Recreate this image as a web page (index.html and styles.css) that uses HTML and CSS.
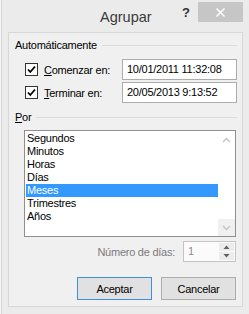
FILE: index.html
```html
<!DOCTYPE html>
<html lang="es">
<head>
<meta charset="utf-8">
<title>Agrupar</title>
<link rel="stylesheet" href="styles.css">
</head>
<body>
<div class="window">
  <div class="titlebar">
    <span class="title">Agrupar</span>
    <span class="help">?</span>
    <span class="close">
      <svg width="11" height="11" viewBox="0 0 11 11"><path d="M1.5 1.5 L9.5 9.5 M9.5 1.5 L1.5 9.5" stroke="#fff" stroke-width="1.6" fill="none"/></svg>
    </span>
  </div>
  <div class="panel">
    <div class="group-head">Automáticamente</div>
    <div class="row">
      <span class="checkbox"><svg width="11" height="11" viewBox="0 0 11 11"><path d="M2 5.5 L4.3 8 L9 2.5" stroke="#000" stroke-width="1.8" fill="none"/></svg></span>
      <span class="label"><u>C</u>omenzar en:</span>
      <div class="textbox">10/01/2011 11:32:08</div>
    </div>
    <div class="row row-second">
      <span class="checkbox"><svg width="11" height="11" viewBox="0 0 11 11"><path d="M2 5.5 L4.3 8 L9 2.5" stroke="#000" stroke-width="1.8" fill="none"/></svg></span>
      <span class="label"><u>T</u>erminar en:</span>
      <div class="textbox">20/05/2013 9:13:52</div>
    </div>
    <div class="group-head group-por"><span><u>P</u>or</span></div>
    <div class="listbox">
      <ul class="items">
        <li>Segundos</li>
        <li>Minutos</li>
        <li>Horas</li>
        <li>Días</li>
        <li class="selected">Meses</li>
        <li>Trimestres</li>
        <li>Años</li>
      </ul>
      <div class="scrollbar">
        <div class="sb-btn sb-up"><svg width="9" height="6" viewBox="0 0 9 6"><path d="M1 5 L4.5 1.5 L8 5" stroke="#c4c4c4" stroke-width="1.5" fill="none"/></svg></div>
        <div class="sb-track"></div>
        <div class="sb-btn sb-down"><svg width="9" height="6" viewBox="0 0 9 6"><path d="M1 1 L4.5 4.5 L8 1" stroke="#c4c4c4" stroke-width="1.5" fill="none"/></svg></div>
      </div>
    </div>
    <div class="spin-row">
      <span class="spin-label">Número de días:</span>
      <div class="spin">
        <span class="spin-val">1</span>
        <div class="spin-btns">
          <div class="spin-btn"><svg width="7" height="4" viewBox="0 0 7 4"><path d="M0.5 4 L3.5 0.5 L6.5 4 Z" fill="#606060"/></svg></div>
          <div class="spin-btn"><svg width="7" height="4" viewBox="0 0 7 4"><path d="M0.5 0 L3.5 3.5 L6.5 0 Z" fill="#606060"/></svg></div>
        </div>
      </div>
    </div>
    <div class="buttons">
      <button class="btn btn-default">Aceptar</button>
      <button class="btn">Cancelar</button>
    </div>
  </div>
</div>
</body>
</html>
```

FILE: styles.css
```css
html, body {
  margin: 0;
  padding: 0;
}
body {
  background: #ececec;
  font-family: "Liberation Sans", Arial, sans-serif;
  font-size: 11px;
  letter-spacing: -0.25px;
  color: #000;
}
.window {
  width: 249px;
  height: 314px;
  box-sizing: border-box;
  background: #ebebeb;
  border-left: 1px solid #f6f6f6;
  box-shadow: inset 1px 0 0 #d6d6d6;
  overflow: hidden;
}
.titlebar {
  display: flex;
  align-items: flex-start;
  height: 32px;
}
.title {
  margin-left: 99px;
  margin-top: 8px;
  font-size: 14.5px;
  line-height: 18px;
  letter-spacing: 0;
  color: #3a3a3a;
}
.help {
  margin-left: auto;
  margin-right: 8px;
  margin-top: 5px;
  font-size: 13px;
  font-weight: bold;
  line-height: 16px;
  color: #333;
  letter-spacing: 0;
}
.close {
  width: 45px;
  height: 20px;
  margin-top: 2px;
  margin-right: 6px;
  background: #c6c6c6;
  display: flex;
  align-items: center;
  justify-content: center;
}
.close svg { display: block; }
.panel {
  margin-left: 7px;
  width: 235px;
  height: 275px;
  box-sizing: border-box;
  border: 1px solid #d7d7d7;
  background: #f0f0f0;
  padding: 5px 5px 0 6px;
}
.group-head {
  display: flex;
  align-items: center;
  line-height: 14px;
  height: 14px;
}
.group-head::after {
  content: "";
  flex: 1;
  height: 1px;
  background: #dcdcdc;
  margin-left: 5px;
}
.group-por {
  margin-top: 7px;
}
.row {
  display: flex;
  align-items: center;
  height: 21px;
  margin-top: 7px;
}
.row-second {
  margin-top: 2px;
}
.checkbox {
  width: 13px;
  height: 13px;
  box-sizing: border-box;
  border: 1px solid #333;
  background: #fff;
  margin-left: 10px;
  display: flex;
  align-items: center;
  justify-content: center;
}
.checkbox svg { display: block; }
.label {
  margin-left: 6px;
}
.textbox {
  margin-left: auto;
  width: 115px;
  height: 21px;
  box-sizing: border-box;
  border: 1px solid #acacac;
  background: #fff;
  line-height: 19px;
  padding-left: 4px;
}
.listbox {
  margin: 6px 1px 0 9px;
  height: 107px;
  box-sizing: border-box;
  border: 1px solid #8f8f8f;
  background: #fff;
  display: flex;
}
.items {
  list-style: none;
  margin: 0;
  padding: 1px 0 0 1px;
  width: 193px;
  box-sizing: border-box;
}
.items li {
  height: 13px;
  line-height: 13px;
  padding-left: 1px;
}
.items li.selected {
  background: #3399ff;
  color: #fff;
}
.scrollbar {
  width: 17px;
  display: flex;
  flex-direction: column;
  background: #fff;
}
.sb-btn {
  height: 17px;
  display: flex;
  align-items: center;
  justify-content: center;
}
.sb-btn svg { display: block; }
.sb-down {
  background: #f0f0f0;
}
.sb-track {
  flex: 1;
}
.spin-row {
  display: flex;
  align-items: center;
  justify-content: flex-end;
  margin: 4px 1px 0 0;
}
.spin-label {
  color: #7b7b7b;
  margin-right: 8px;
}
.spin {
  width: 53px;
  height: 21px;
  box-sizing: border-box;
  border: 1px solid #c4c4c4;
  background: #fbfbfb;
  display: flex;
}
.spin-val {
  flex: 1;
  line-height: 19px;
  padding-left: 4px;
  color: #8a8a8a;
}
.spin-btns {
  width: 15px;
  margin: 1px 1px 1px 0;
  display: flex;
  flex-direction: column;
  gap: 1px;
}
.spin-btn {
  flex: 1;
  background: #ececec;
  display: flex;
  align-items: center;
  justify-content: center;
}
.spin-btn svg { display: block; }
.buttons {
  display: flex;
  justify-content: flex-end;
  gap: 9px;
  margin: 15px 1px 0 0;
}
.btn {
  width: 75px;
  height: 23px;
  box-sizing: border-box;
  border: 1px solid #adadad;
  background: #e1e1e1;
  font-family: inherit;
  font-size: 11px;
  letter-spacing: -0.25px;
  color: #000;
  padding: 0;
  margin: 0;
}
.btn-default {
  border-color: #3f8fdc;
}
```
